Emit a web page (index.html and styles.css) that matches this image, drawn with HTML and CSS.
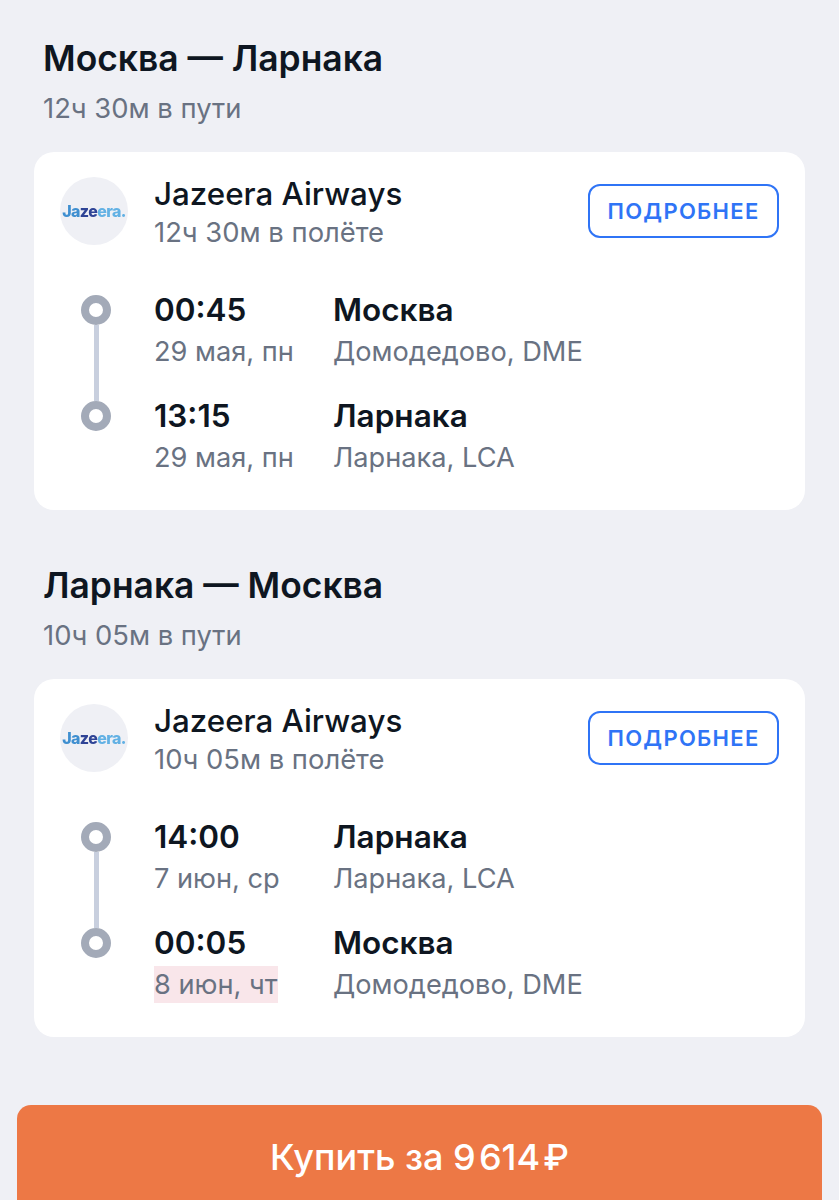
FILE: index.html
```html
<!DOCTYPE html>
<html lang="ru">
<head>
  <meta charset="UTF-8" />
  <meta name="viewport" content="width=device-width, initial-scale=1.0"/>
  <title>Москва — Ларнака</title>
  <link rel="stylesheet" href="styles.css">
</head>
<body>
  <section class="leg">
    <h2>Москва — Ларнака</h2>
    <p class="total">12ч 30м в пути</p>
    <div class="card">
      <div class="card-head">
        <div class="logo"><span class="logo-a">Ja</span><span class="logo-b">ze</span><span class="logo-c">era.</span></div>
        <div class="airline">
          <div class="airline-name">Jazeera Airways</div>
          <div class="airline-time">12ч 30м в полёте</div>
        </div>
        <a class="more">ПОДРОБНЕЕ</a>
      </div>
      <div class="route">
        <div class="track"><i class="dot"></i><i class="line"></i><i class="dot"></i></div>
        <div class="stops">
          <div class="stop">
            <div class="when"><div class="big">00:45</div><div class="small">29 мая, пн</div></div>
            <div class="where"><div class="big">Москва</div><div class="small">Домодедово, DME</div></div>
          </div>
          <div class="stop">
            <div class="when"><div class="big">13:15</div><div class="small">29 мая, пн</div></div>
            <div class="where"><div class="big">Ларнака</div><div class="small">Ларнака, LCA</div></div>
          </div>
        </div>
      </div>
    </div>
  </section>

  <section class="leg">
    <h2>Ларнака — Москва</h2>
    <p class="total">10ч 05м в пути</p>
    <div class="card">
      <div class="card-head">
        <div class="logo"><span class="logo-a">Ja</span><span class="logo-b">ze</span><span class="logo-c">era.</span></div>
        <div class="airline">
          <div class="airline-name">Jazeera Airways</div>
          <div class="airline-time">10ч 05м в полёте</div>
        </div>
        <a class="more">ПОДРОБНЕЕ</a>
      </div>
      <div class="route">
        <div class="track"><i class="dot"></i><i class="line"></i><i class="dot"></i></div>
        <div class="stops">
          <div class="stop">
            <div class="when"><div class="big">14:00</div><div class="small">7 июн, ср</div></div>
            <div class="where"><div class="big">Ларнака</div><div class="small">Ларнака, LCA</div></div>
          </div>
          <div class="stop">
            <div class="when"><div class="big">00:05</div><div class="small"><span class="next-day">8 июн, чт</span></div></div>
            <div class="where"><div class="big">Москва</div><div class="small">Домодедово, DME</div></div>
          </div>
        </div>
      </div>
    </div>
  </section>

  <button class="buy">Купить за 9&#8202;614&#8202;₽</button>
</body>
</html>
```

FILE: styles.css
```css
html, body {
  height: 1200px;
  overflow: hidden;
}
body {
  font-family: Inter, "Noto Sans", sans-serif;
  margin: 0;
  padding: 0;
  background: #eff0f5;
  color: #0e1621;
}
.leg {
  padding: 0 34px;
  margin-bottom: 55px;
}
.leg:first-child {
  padding-top: 38px;
}
h2 {
  margin: 0 0 0 9px;
  font-size: 35.4px;
  line-height: 42px;
  font-weight: 600;
}
.total {
  margin: 12px 0 0 9px;
  font-size: 27.4px;
  line-height: 32px;
  color: #697282;
}
.card {
  margin-top: 28px;
  height: 358px;
  box-sizing: border-box;
  padding: 25px 26px 0;
  background: white;
  border-radius: 20px;
}
.card-head {
  display: flex;
  align-items: flex-start;
}
.logo {
  width: 68px;
  height: 68px;
  flex: none;
  display: flex;
  align-items: center;
  justify-content: center;
  padding-bottom: 1px;
  box-sizing: border-box;
  background: #eff0f5;
  border-radius: 50%;
  font-size: 16px;
  font-weight: 800;
  letter-spacing: -0.6px;
}
.logo span {
  filter: blur(0.5px);
}
.logo-a { color: #3f8fd0; }
.logo-b { color: #2f4496; }
.logo-c { color: #62b1e4; }
.airline {
  margin: -1px 0 0 26px;
  flex: 1;
}
.airline-name {
  font-size: 31.3px;
  line-height: 36px;
  font-weight: 500;
}
.airline-time {
  margin-top: 4px;
  font-size: 27.4px;
  line-height: 32px;
  color: #697282;
}
.more {
  width: 191px;
  height: 54px;
  box-sizing: border-box;
  display: flex;
  align-items: center;
  justify-content: center;
  margin-top: 7px;
  border: 2px solid #2f74f6;
  border-radius: 12px;
  color: #2f74f6;
  font-size: 22px;
  font-weight: 600;
  letter-spacing: 1.3px;
}
.route {
  display: flex;
  margin-top: 47px;
}
.track {
  width: 68px;
  height: 136px;
  flex: none;
  margin: 0 24px 0 2px;
  display: flex;
  flex-direction: column;
  align-items: center;
}
.dot {
  width: 30px;
  height: 30px;
  flex: none;
  box-sizing: border-box;
  border: 8px solid #a3aab8;
  border-radius: 50%;
  background: white;
}
.line {
  width: 5px;
  flex: 1;
  background: #c8cfde;
}
.stops {
  display: flex;
  flex-direction: column;
  gap: 22px;
  margin-top: -6px;
}
.stop {
  display: flex;
}
.when {
  width: 179px;
}
.big {
  font-size: 31.5px;
  line-height: 42px;
  font-weight: 600;
}
.small {
  font-size: 27.2px;
  line-height: 42px;
  color: #697282;
}
.next-day {
  background: #f9e6ea;
  padding: 2px 1px 2px 0;
}
.buy {
  display: block;
  width: 805px;
  height: 95px;
  margin: 68px 17px 0;
  padding: 9px 0 0;
  border: none;
  border-radius: 14px 14px 0 0;
  background: #ed7845;
  color: white;
  font-family: Inter, "Noto Sans", sans-serif;
  font-size: 36px;
  font-weight: 500;
}
```
